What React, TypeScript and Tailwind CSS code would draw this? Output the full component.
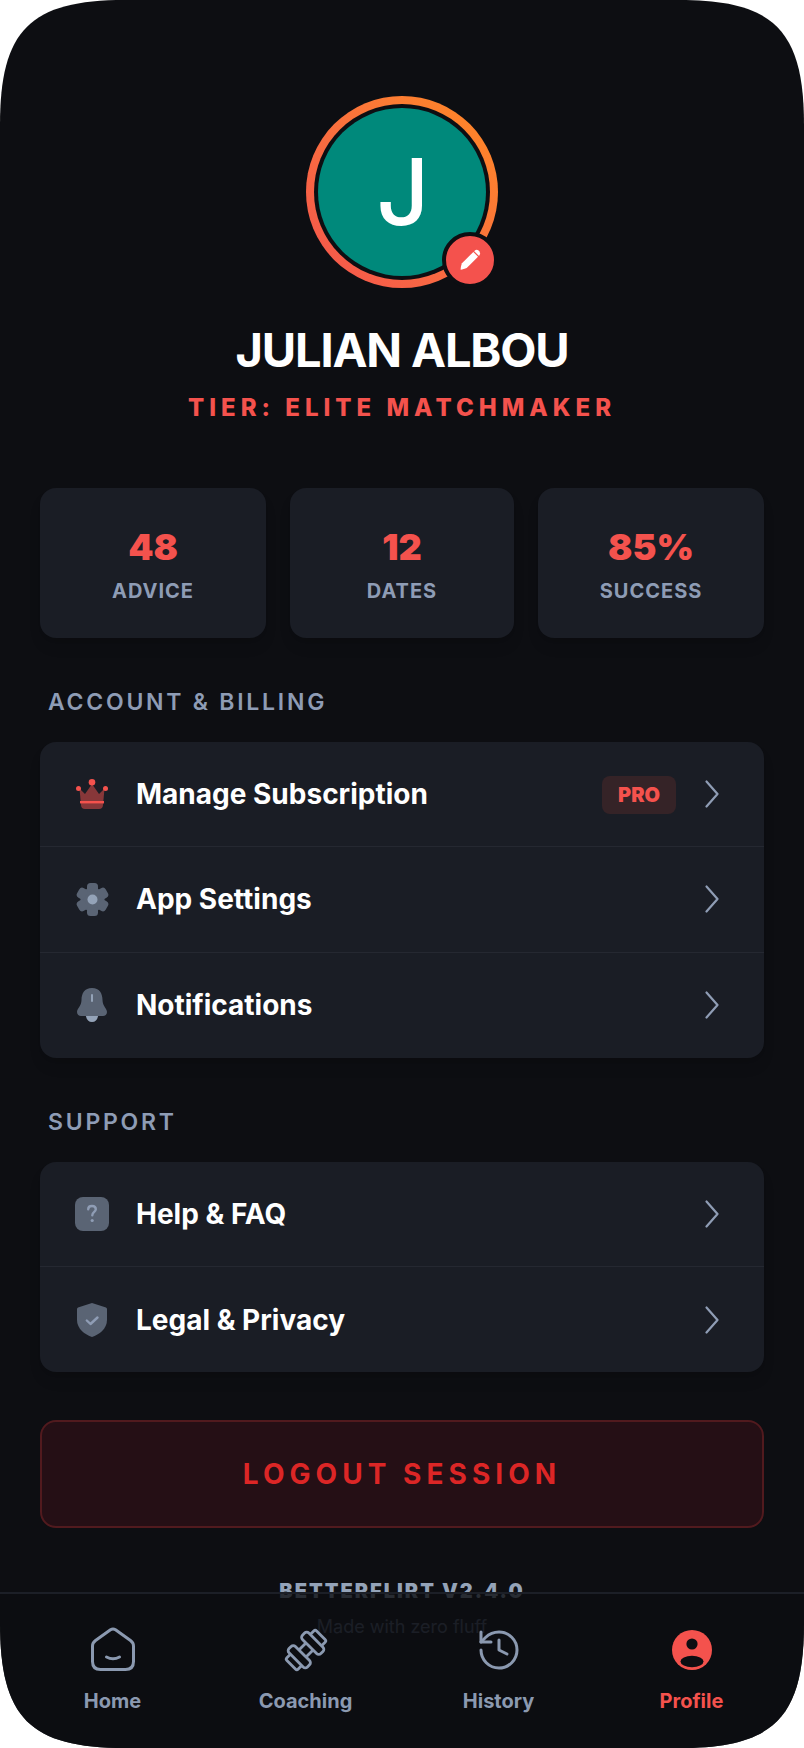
import React from 'react';

const Chevron = () => (
    <svg width="14" height="28" viewBox="0 0 14 28" fill="none" className="text-[#8f9db5] shrink-0">
        <path d="M1.5 1.5 L12.5 14 L1.5 26.5" stroke="currentColor" strokeWidth="2.200" strokeLinecap="round" strokeLinejoin="round" />
    </svg>
);

const CrownIcon = () => (
    <svg viewBox="0 0 32 30" className="w-8 h-[30px]">
        <path d="M3.5 9.5 L9 15 L16 5 L23 15 L28.5 9.5 L27 26 Q26.8 30 23 30 H9 Q5.2 30 5 26 Z" fill="#f4524d" fillOpacity="0.5" />
        <rect x="4" y="22" width="24" height="2.4" fill="#f4524d" />
        <circle cx="16" cy="3.3" r="3.3" fill="#f4524d" />
        <circle cx="2.5" cy="9.5" r="2.5" fill="#f4524d" />
        <circle cx="29.5" cy="9.5" r="2.5" fill="#f4524d" />
    </svg>
);

const GearIcon = () => (
    <svg viewBox="-16.500 -16.500 33 33" className="w-[33px] h-[33px]">
        <circle r="12" fill="#5a6474" />
        {[0, 60, 120, 180, 240, 300].map((angle) => (
            <rect key={angle} x="-5.500" y="-16.500" width="11" height="9" rx="3.500" fill="#5a6474" transform={`rotate(${angle})`} />
        ))}
        <circle r="5" fill="#94a3b8" />
    </svg>
);

const BellIcon = () => (
    <svg viewBox="0 0 30 34" className="w-[30px] h-[34px]">
        <path d="M8.500 26 H21.500 Q20.500 34 15 34 Q9.500 34 8.500 26 Z" fill="#94a3b8" />
        <path d="M15 0 C22.500 0 25.500 5.500 25.500 12 C25.500 18 30 20.500 30 24 C30 26.500 28 28 26 28 H4 C2 28 0 26.500 0 24 C0 20.500 4.500 18 4.500 12 C4.500 5.500 7.500 0 15 0 Z" fill="#5a6474" />
        <rect x="14" y="6" width="2" height="8" rx="1" fill="#94a3b8" />
    </svg>
);

const HelpIcon = () => (
    <svg viewBox="0 0 34 34" className="w-[34px] h-[34px]">
        <rect width="34" height="34" rx="8" fill="#5a6474" />
        <path d="M13.200 12.200 C13.200 10 15 9 17 9 C19.200 9 20.800 10.300 20.800 12.300 C20.800 14.800 17.300 15 17.300 18.200" fill="none" stroke="#8f9db5" strokeWidth="2.400" strokeLinecap="round" />
        <circle cx="17.200" cy="23.500" r="1.600" fill="#8f9db5" />
    </svg>
);

const ShieldIcon = () => (
    <svg viewBox="0 0 30 34" className="w-[30px] h-[34px]">
        <path d="M15 0 L29 4.500 Q30 5 30 6 V17 C30 26 22 31.500 15 34 C8 31.500 0 26 0 17 V6 Q0 5 1 4.500 Z" fill="#5a6474" />
        <path d="M9.800 17.500 L13.500 21 L20.500 14.500" fill="none" stroke="#8f9db5" strokeWidth="2.400" strokeLinecap="round" strokeLinejoin="round" />
    </svg>
);

const HomeIcon = () => (
    <svg viewBox="0 0 44 44" fill="none" className="w-11 h-11 -translate-y-px text-[#8b99b0]" stroke="currentColor" strokeWidth="3" strokeLinecap="round" strokeLinejoin="round">
        <path d="M19.500 2.800 Q22 1.200 24.500 2.800 L39.500 13.500 Q42.500 15.800 42.500 19 V34.500 Q42.500 42.500 34.500 42.500 H9.500 Q1.500 42.500 1.500 34.500 V19 Q1.500 15.800 4.500 13.500 Z" />
        <path d="M15.500 30 Q22 33.500 28.500 30" />
    </svg>
);

const DumbbellIcon = () => (
    <svg viewBox="-24 -24 48 48" fill="none" className="w-12 h-12 text-[#8b99b0]" stroke="currentColor" strokeWidth="2.800" strokeLinejoin="round">
        <g transform="rotate(-45)">
            <path d="M-5 -5 H5 M-5 5 H5" />
            <rect x="-14" y="-13" width="9" height="26" rx="3" />
            <rect x="5" y="-13" width="9" height="26" rx="3" />
            <path d="M-14 -8 H-19 Q-21 -8 -21 -6 V6 Q-21 8 -19 8 H-14" />
            <path d="M14 -8 H19 Q21 -8 21 -6 V6 Q21 8 19 8 H14" />
        </g>
    </svg>
);

const HistoryIcon = () => (
    <svg viewBox="0 0 24 24" fill="none" className="w-12 h-12 text-[#8b99b0]" stroke="currentColor" strokeWidth="1.500" strokeLinecap="round" strokeLinejoin="round">
        <path d="M3 12a9 9 0 1 0 9-9 9.750 9.750 0 0 0-6.740 2.740L3 8" />
        <path d="M3 3v5h5" />
        <path d="M12 7v5l4 2" />
    </svg>
);

const ProfileIcon = () => (
    <svg viewBox="0 0 40 40" className="w-10 h-10">
        <circle cx="20" cy="20" r="20" fill="#f4524d" />
        <circle cx="20" cy="14" r="5.600" fill="#0d0e12" />
        <ellipse cx="20" cy="31.500" rx="11.500" ry="5.800" fill="#0d0e12" />
    </svg>
);

const PencilIcon = () => (
    <svg viewBox="0 0 20 20" className="w-[22px] h-[22px]">
        <path d="M13 2.700 L17.300 7 L7 17.300 C5.500 18 3 18.800 1.500 18.800 C1.500 17 2 14.500 2.700 13 Z" fill="#fff" />
        <path d="M14.200 1.500 Q16 0 17.800 1.400 L18.600 2.200 Q20 4 18.500 5.800 L18 6.200 L13.800 2 Z" fill="#fff" />
    </svg>
);

const stats = [
    { value: '48', label: 'ADVICE' },
    { value: '12', label: 'DATES' },
    { value: '85%', label: 'SUCCESS' },
];

const accountRows = [
    { icon: <CrownIcon />, label: 'Manage Subscription', badge: 'PRO' },
    { icon: <GearIcon />, label: 'App Settings' },
    { icon: <BellIcon />, label: 'Notifications' },
];

const supportRows = [
    { icon: <HelpIcon />, label: 'Help & FAQ' },
    { icon: <ShieldIcon />, label: 'Legal & Privacy' },
];

const tabs = [
    { icon: <HomeIcon />, label: 'Home' },
    { icon: <DumbbellIcon />, label: 'Coaching' },
    { icon: <HistoryIcon />, label: 'History' },
    { icon: <ProfileIcon />, label: 'Profile', active: true },
];

type RowItem = { icon: React.ReactNode; label: string; badge?: string };

function MenuCard({ rows }: { rows: RowItem[] }) {
    return (
        <div className="bg-[#1a1d25] rounded-2xl divide-y divide-[#252831] shadow-lg">
            {rows.map((row) => (
                <div key={row.label} className="flex items-center h-[105.250px] pl-[34px] pr-[45px]">
                    <div className="w-[36px] flex justify-center shrink-0">{row.icon}</div>
                    <span className="ml-[26px] text-[28px] font-bold text-white flex-1">{row.label}</span>
                    {row.badge && (
                        <span className="mr-[29px] mt-[2px] h-[38px] w-[74px] flex items-center justify-center rounded-lg bg-[#352327] text-[#f4524d] text-[20px] font-black">
                            {row.badge}
                        </span>
                    )}
                    <Chevron />
                </div>
            ))}
        </div>
    );
}

function App() {
    return (
        <div className="relative w-[804px] h-[1748px] overflow-hidden bg-[#0d0e12] text-white font-['Inter',sans-serif] [clip-path:path('M0_125C0_30_30_0_125_0H679C774_0_804_30_804_125V1623C804_1718_774_1748_679_1748H125C30_1748_0_1718_0_1623Z')]">
            <div className="flex flex-col items-center pt-[96px]">
                <div className="relative w-[192px] h-[192px] rounded-full bg-gradient-to-tr from-[#f4524d] to-[#ff8a1f] p-[8px]">
                    <div className="w-full h-full rounded-full bg-[#0d0e12] p-[4px]">
                        <div className="w-full h-full rounded-full bg-[#00897b] flex items-center justify-center pl-[2px] text-[92px] font-medium leading-none">
                            J
                        </div>
                    </div>
                    <div className="absolute left-[136px] top-[136px] w-[56px] h-[56px] rounded-full bg-[#f4524d] border-4 border-[#0d0e12] flex items-center justify-center">
                        <PencilIcon />
                    </div>
                </div>
                <h1 className="mt-[35px] text-[47px] leading-[54px] font-bold tracking-tight">JULIAN ALBOU</h1>
                <p className="mt-[16px] text-[24px] leading-[30px] font-extrabold tracking-[5px] text-[#f4524d]">TIER: ELITE MATCHMAKER</p>
            </div>

            <div className="px-[40px] mt-[65px]">
                <div className="grid grid-cols-[226px_224px_226px] gap-[24px]">
                    {stats.map((stat) => (
                        <div key={stat.label} className="h-[150px] rounded-2xl bg-[#1a1d25] shadow-lg flex flex-col items-center pt-[37px]">
                            <div className="text-[36px] leading-[44px] font-black text-[#f4524d]">{stat.value}</div>
                            <div className="mt-[8px] text-[20px] leading-[28px] font-bold tracking-wider text-[#8e9cb5]">{stat.label}</div>
                        </div>
                    ))}
                </div>

                <h2 className="mt-[49px] pl-[8px] text-[23px] leading-[30px] font-semibold tracking-[2.750px] text-[#8e9cb5]">ACCOUNT &amp; BILLING</h2>
                <div className="mt-[25px]">
                    <MenuCard rows={accountRows} />
                </div>

                <h2 className="mt-[49px] pl-[8px] text-[23px] leading-[30px] font-semibold tracking-[2.750px] text-[#8e9cb5]">SUPPORT</h2>
                <div className="mt-[25px]">
                    <MenuCard rows={supportRows} />
                </div>

                <button className="mt-[48px] w-full h-[108px] rounded-2xl bg-[#250f15] border-2 border-[#511a1e] text-[#dc2626] text-[28px] font-bold tracking-[0.18em]">
                    LOGOUT SESSION
                </button>

                <div className="mt-[49px] flex flex-col items-center">
                    <div className="text-[20px] leading-[28px] font-black tracking-[0.1em] text-[#94a3b8]">BETTERFLIRT V2.4.0</div>
                    <div className="mt-[8px] text-[18px] leading-[28px] text-[#58627a]">Made with zero fluff</div>
                </div>
            </div>

            <nav className="absolute left-0 right-0 bottom-0 h-[156px] border-t-2 border-[#1c1f27] bg-[#0d0e12]/80 px-4 grid grid-cols-4">
                {tabs.map((tab) => (
                    <div key={tab.label} className="flex flex-col items-center pt-[34px]">
                        <div className="h-11 flex items-center justify-center">{tab.icon}</div>
                        <span className={`mt-[15px] text-[20px] leading-[28px] font-bold ${tab.active ? 'text-[#f4524d]' : 'text-[#8b99b0]'}`}>
                            {tab.label}
                        </span>
                    </div>
                ))}
            </nav>
        </div>
    );
}

export default App;
